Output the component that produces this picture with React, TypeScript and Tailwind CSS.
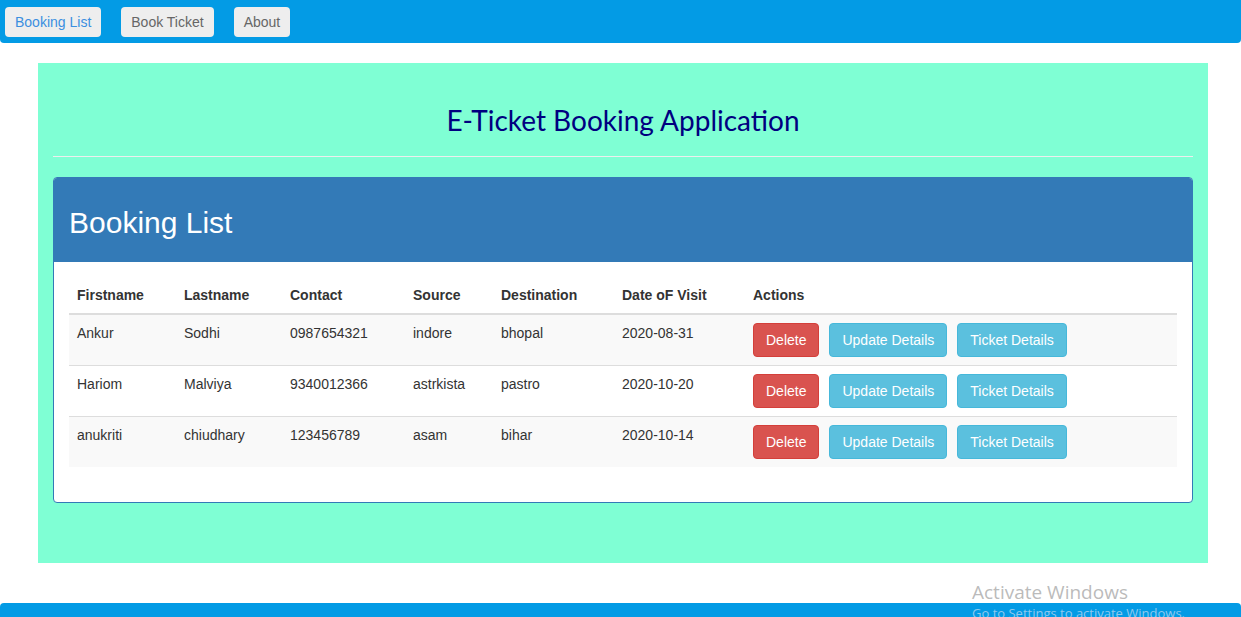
import React from 'react';

type Booking = {
  firstname: string;
  lastname: string;
  contact: string;
  source: string;
  destination: string;
  date: string;
};

const bookings: Booking[] = [
  { firstname: 'Ankur', lastname: 'Sodhi', contact: '0987654321', source: 'indore', destination: 'bhopal', date: '2020-08-31' },
  { firstname: 'Hariom', lastname: 'Malviya', contact: '9340012366', source: 'astrkista', destination: 'pastro', date: '2020-10-20' },
  { firstname: 'anukriti', lastname: 'chiudhary', contact: '123456789', source: 'asam', destination: 'bihar', date: '2020-10-14' },
];

export default function App() {
  return (
    <div className="relative h-[617px] overflow-hidden bg-white text-[14px] text-[#333] font-['Liberation_Sans',Arial,sans-serif]">
      {/* Top nav */}
      <nav className="h-[43px] bg-[#039be5] rounded-b-[4px] flex items-center gap-5 px-[5px]">
        <button className="h-[30px] px-[10px] pt-px rounded-[4px] bg-[#eeeeee] text-[#3b8fe0] text-[14px]">Booking List</button>
        <button className="h-[30px] px-[10px] pt-px rounded-[4px] bg-[#eeeeee] text-[#666] text-[14px]">Book Ticket</button>
        <button className="h-[30px] px-[10px] pt-px rounded-[4px] bg-[#eeeeee] text-[#666] text-[14px]">About</button>
      </nav>

      <main className="ml-[38px] mr-[33px] mt-5 mb-10 h-[500px] bg-[#7fffd4] px-[15px]">
        <h1 className="pt-[40px] pb-[19px] text-center text-[28px] leading-[34px] text-[#000080] font-['Lato','Open_Sans',sans-serif]">
          E-Ticket Booking Application
        </h1>
        <hr className="border-0 border-t border-[#eeeeee] mb-5 mt-0" />

        {/* Panel */}
        <div className="border border-[#337ab7] rounded-[4px] bg-white">
          <div className="bg-[#337ab7] h-[84px] px-[15px] flex items-center rounded-t-[3px]">
            <h2 className="text-white text-[30px] leading-[33px] pt-[5px]">Booking List</h2>
          </div>
          <div className="p-[15px]">
            <table className="w-full border-collapse mb-5 text-left">
              <thead>
                <tr className="border-b-2 border-[#dddddd]">
                  <th className="w-[107px] p-2 leading-5 font-bold">Firstname</th>
                  <th className="w-[106px] p-2 leading-5 font-bold">Lastname</th>
                  <th className="w-[123px] p-2 leading-5 font-bold">Contact</th>
                  <th className="w-[88px] p-2 leading-5 font-bold">Source</th>
                  <th className="w-[121px] p-2 leading-5 font-bold">Destination</th>
                  <th className="w-[131px] p-2 leading-5 font-bold">Date oF Visit</th>
                  <th className="p-2 leading-5 font-bold">Actions</th>
                </tr>
              </thead>
              <tbody>
                {bookings.map((b, i) => (
                  <tr key={i} className={`border-t border-[#dddddd] first:border-t-0 ${i % 2 === 0 ? 'bg-[#f9f9f9]' : 'bg-white'}`}>
                    <td className="p-2 leading-5 align-top">{b.firstname}</td>
                    <td className="p-2 leading-5 align-top">{b.lastname}</td>
                    <td className="p-2 leading-5 align-top">{b.contact}</td>
                    <td className="p-2 leading-5 align-top">{b.source}</td>
                    <td className="p-2 leading-5 align-top">{b.destination}</td>
                    <td className="p-2 leading-5 align-top">{b.date}</td>
                    <td className="p-2 leading-5 align-top">
                      <div className="flex gap-[10px]">
                        <button className="h-[34px] px-3 rounded-[4px] border border-[#d43f3a] bg-[#d9534f] text-white text-[14px]">Delete</button>
                        <button className="h-[34px] px-3 rounded-[4px] border border-[#46b8da] bg-[#5bc0de] text-white text-[14px]">Update Details</button>
                        <button className="h-[34px] px-3 rounded-[4px] border border-[#46b8da] bg-[#5bc0de] text-white text-[14px]">Ticket Details</button>
                      </div>
                    </td>
                  </tr>
                ))}
              </tbody>
            </table>
          </div>
        </div>
      </main>

      <footer className="h-[50px] bg-[#039be5] rounded-t-[4px]" />

      {/* Windows watermark */}
      <div className="absolute left-[972px] top-[579px] text-[#a9a9a9]/80 font-['Open_Sans',sans-serif] pointer-events-none">
        <div className="text-[19px] leading-[26px]">Activate Windows</div>
        <div className="text-[13px] leading-[16px] text-[#8fc9ee]">Go to Settings to activate Windows.</div>
      </div>
    </div>
  );
}
